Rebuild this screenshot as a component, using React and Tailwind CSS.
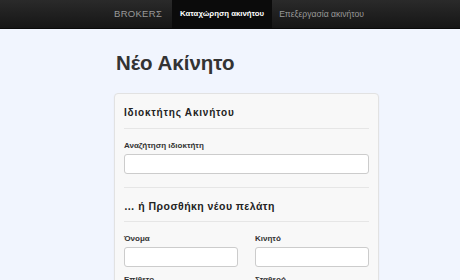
import React from "react";

const Field = ({ label }) => (
  <div>
    <label className="block text-[8px] font-bold text-[#333] leading-[10px] mb-[3px]">{label}</label>
    <input type="text" className="block w-full h-[20px] rounded-[3px] border border-[#ccc] bg-white" />
  </div>
);

const App = () => {
  return (
    <div className="min-h-screen bg-[#f1f5fe] font-['Liberation_Sans',Arial,sans-serif] text-[#333]">
      <nav className="h-[29px] bg-gradient-to-b from-[#2a2a2a] to-[#161616] border-b border-[#0a0a0a]">
        <div className="ml-[114px] flex h-full items-center">
          <span className="text-[9.5px] text-[#999] tracking-[0.3px] pr-[10px]">BROKERΣ</span>
          <span className="h-full flex items-center px-[8px] bg-[#0b0b0b] text-white text-[7.8px] font-bold">
            Καταχώρηση ακινήτου
          </span>
          <span className="px-[7px] text-[8.6px] text-[#999]">Επεξεργασία ακινήτου</span>
        </div>
      </nav>

      <div className="ml-[114px] w-[265px]">
        <h1 className="mt-[22px] pl-[2px] text-[20.5px] font-bold leading-[24px] text-[#333]">Νέο Ακίνητο</h1>

        <div className="mt-[18px] bg-[#f8f8f8] border border-[#e2e2e2] rounded-[4px] px-[9px] pt-[12px] pb-[20px] shadow-[0_1px_2px_rgba(0,0,0,0.05)]">
          <h2 className="text-[10px] font-bold leading-[14px] tracking-[0.8px] text-[#222]">Ιδιοκτήτης Ακινήτου</h2>
          <div className="mt-[8px] border-t border-[#e6e6e6]" />

          <div className="mt-[12px]">
            <Field label="Αναζήτηση ιδιοκτήτη" />
          </div>
          <div className="mt-[13px] border-t border-[#e6e6e6]" />

          <h2 className="mt-[11px] text-[10.5px] font-bold leading-[14px] tracking-[0.45px] text-[#222]">… ή Προσθήκη νέου πελάτη</h2>
          <div className="mt-[8px] border-t border-[#e6e6e6]" />

          <div className="mt-[12px] grid grid-cols-2 gap-x-[17px] gap-y-[8px]">
            <Field label="Όνομα" />
            <Field label="Κινητό" />
            <Field label="Επίθετο" />
            <Field label="Σταθερό" />
          </div>
        </div>
      </div>
    </div>
  );
};

export default App;
